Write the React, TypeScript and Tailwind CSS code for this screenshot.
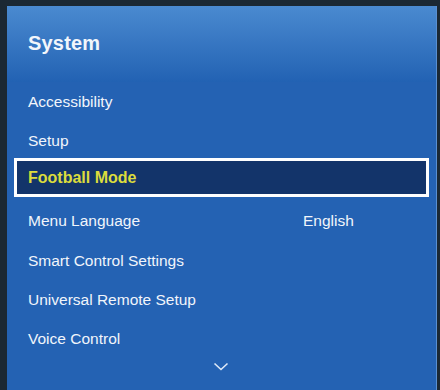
import React from "react";

const items: { label: string; value?: string; h: string }[] = [
  { label: "Accessibility", h: "h-[40px]" },
  { label: "Setup", h: "h-[38px]" },
];

const items2: { label: string; value?: string; h: string }[] = [
  { label: "Menu Language", value: "English", h: "h-[40px]" },
  { label: "Smart Control Settings", h: "h-[39px]" },
  { label: "Universal Remote Setup", h: "h-[39px]" },
  { label: "Voice Control", h: "h-[40px]" },
];

function Row({ label, value, h }: { label: string; value?: string; h: string }) {
  return (
    <div className={`${h} flex items-center pl-[21px] text-[15.5px] text-[#f1f5fb]`}>
      <span className="w-[275px]">{label}</span>
      {value && <span>{value}</span>}
    </div>
  );
}

export default function App() {
  return (
    <div
      className="w-[440px] h-[390px] bg-[#1b2833] pt-[6px] pl-[7px] pr-[3px] flex overflow-hidden"
      style={{ fontFamily: '"Liberation Sans", Arial, sans-serif' }}
    >
      <div className="flex-1 flex flex-col bg-[#2462b3] border-r border-[#5a8fd0] relative">
        <div className="h-[76px] flex items-center pl-[21px] bg-gradient-to-b from-[#4a8ad0] to-[#2262b3]">
          <span className="text-[20px] font-bold text-[#f2f6fb] tracking-[0.2px] pb-[2px]">System</span>
        </div>
        {items.map((it) => (
          <Row key={it.label} {...it} />
        ))}
        <div className="mx-[7px] mt-[-2px] h-[39px] border-[3px] border-white bg-[#13346a] flex items-center pl-[11px]">
          <span className="text-[16px] font-bold text-[#dcdc3c]">Football Mode</span>
        </div>
        <div className="h-[4px]" />
        {items2.map((it) => (
          <Row key={it.label} {...it} />
        ))}
        <div className="flex justify-center pt-[3px] pr-[2px]">
          <svg width="16" height="9" viewBox="0 0 16 9" fill="none">
            <path d="M1.5 1.5 L8 7.5 L14.5 1.5" stroke="#dfe9f7" strokeWidth="1.6" />
          </svg>
        </div>
      </div>
    </div>
  );
}
